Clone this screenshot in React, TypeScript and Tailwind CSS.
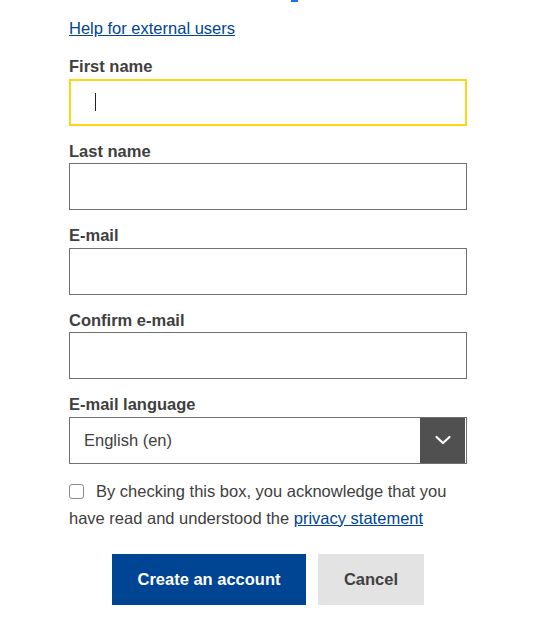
import React from "react";

const Field = ({ label, focused }: { label: string; focused?: boolean }) => (
  <div className="flex flex-col">
    <label className="text-[16.5px] font-bold leading-[24px] text-[#404040] mb-[0.5px]">{label}</label>
    {focused ? (
      <div className="h-[47px] border-2 border-[#ffd617] bg-white flex items-center pl-[24px]">
        <div className="w-px h-[18px] bg-[#222]" />
      </div>
    ) : (
      <input className="h-[47px] border border-[#707070] bg-white outline-none px-3" />
    )}
  </div>
);

export default function App() {
  return (
    <div
      className="relative w-[552px] h-[619px] bg-white overflow-hidden"
      style={{ fontFamily: '"Liberation Sans", Arial, sans-serif' }}
    >
      <div className="absolute left-[291px] top-0 w-[7px] h-[2px] bg-[#1a73e8]" />
      <div className="pl-[69px] w-[467px] pt-[16px] flex flex-col">
        <a href="#" className="self-start text-[16.5px] leading-[24px] text-[#004494] underline">
          Help for external users
        </a>
        <div className="mt-[14px] flex flex-col gap-[13px]">
          <Field label="First name" focused />
          <Field label="Last name" />
          <Field label="E-mail" />
          <Field label="Confirm e-mail" />
          <div className="flex flex-col">
            <label className="text-[16.5px] font-bold leading-[24px] text-[#404040] mb-[0.5px]">E-mail language</label>
            <div className="h-[47px] border border-[#707070] bg-white flex items-stretch">
              <div className="flex-1 flex items-center pl-[14px] text-[16.5px] text-[#404040]">English (en)</div>
              <div className="w-[45px] bg-[#505050] flex items-center justify-center mr-px">
                <svg width="18" height="12" viewBox="0 0 18 12" fill="none">
                  <path d="M2.5 3l6.5 6 6.5-6" stroke="white" strokeWidth="2.2" strokeLinecap="round" strokeLinejoin="round" />
                </svg>
              </div>
            </div>
          </div>
        </div>
        <div className="mt-[14px] text-[16.5px] leading-[27px] text-[#404040]">
          <span className="inline-block align-[-2px] w-[15px] h-[15px] border border-[#8a8a8a] rounded-[3px] mr-[12px]" />
          By checking this box, you acknowledge that you have read and understood the{" "}
          <a href="#" className="text-[#004494] underline">privacy statement</a>
        </div>
        <div className="mt-[22px] flex justify-center gap-[12px]">
          <button className="w-[194px] h-[51px] bg-[#004494] text-white font-bold text-[16.5px]">
            Create an account
          </button>
          <button className="w-[106px] h-[51px] bg-[#e3e3e3] text-[#404040] font-bold text-[16.5px]">
            Cancel
          </button>
        </div>
      </div>
    </div>
  );
}
